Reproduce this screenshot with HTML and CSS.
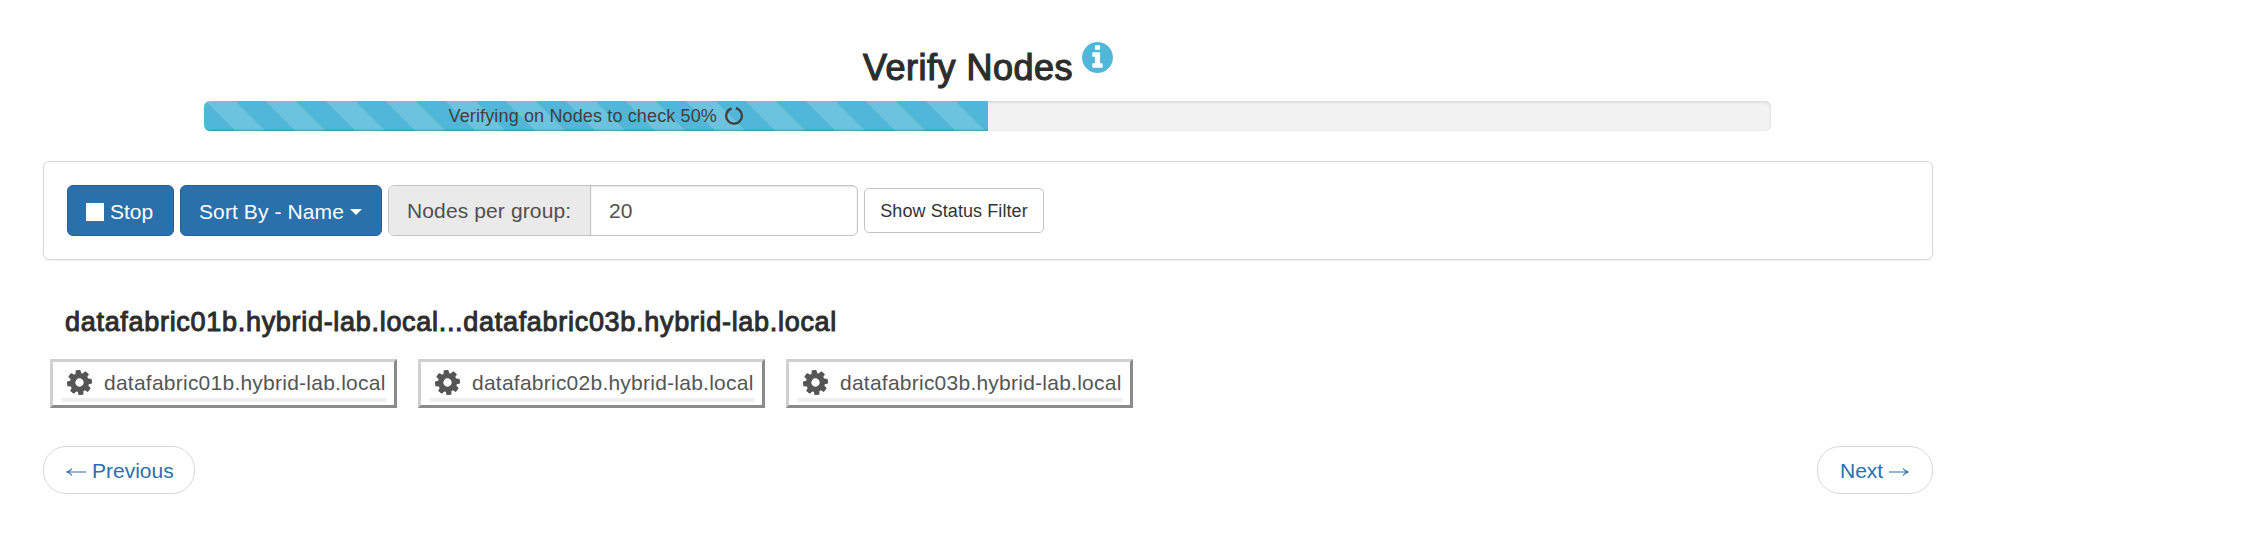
FILE: index.html
```
<!DOCTYPE html>
<html lang="en">
<head>
<meta charset="utf-8">
<title>Verify Nodes</title>
<link rel="stylesheet" href="styles.css">
</head>
<body>
<svg class="sprite" aria-hidden="true">
  <symbol id="cog" viewBox="0 0 1536 1536">
    <path transform="rotate(-7 768 768)" fill-rule="evenodd" d="M1024 768q0-106-75-181t-181-75-181 75-75 181 75 181 181 75 181-75 75-181zm512-109v222q0 12-8 23t-20 13l-185 28q-19 54-39 91 35 50 107 138 10 12 10 25t-9 23q-27 37-99 108t-94 71q-12 0-26-9l-138-108q-44 23-91 38-16 136-29 186-7 28-36 28H657q-14 0-24.500-8.500T621 1506l-28-184q-49-16-90-37l-141 107q-10 9-25 9-14 0-25-11-126-114-165-168-7-10-7-23 0-12 8-23 15-21 51-66.500t54-70.500q-27-50-41-99L29 913q-13-2-21-12.500T0 877V655q0-12 8-23t19-13l186-28q14-46 39-92-40-57-107-138-10-12-10-24 0-10 9-23 26-36 98.500-107.500T337 135q13 0 26 10l138 107q44-23 91-38 16-136 29-186 7-28 36-28h222q14 0 24.500 8.500T915 30l28 184q49 16 90 37l142-107q9-9 24-9 13 0 25 10 129 119 165 170 7 8 7 22 0 12-8 23-15 21-51 66.500t-54 70.500q26 50 41 98l183 28q13 2 21 12.500t8 23.500z"/>
  </symbol>
</svg>
<main class="page">
  <header class="head">
    <h3 class="title">Verify Nodes</h3>
    <svg class="info" viewBox="0 0 1536 1536"><path fill-rule="evenodd" d="M1024 1248v-160q0-14-9-23t-23-9h-96V544q0-14-9-23t-23-9H544q-14 0-23 9t-9 23v160q0 14 9 23t23 9h96v320h-96q-14 0-23 9t-9 23v160q0 14 9 23t23 9h448q14 0 23-9t9-23zM896 352V192q0-14-9-23t-23-9H672q-14 0-23 9t-9 23v160q0 14 9 23t23 9h192q14 0 23-9t9-23zM1536 768q0 209-103 385.500T1153.500 1433 768 1536t-385.500-103T103 1153.500 0 768t103-385.500T382.500 103 768 0t385.500 103T1433 382.500 1536 768z"/></svg>
  </header>
  <div class="progress">
    <div class="bar" style="width:50%">
      <span class="bar-text">Verifying on Nodes to check 50%</span>
      <svg class="spin" viewBox="0 0 18 20"><path d="M10.900 2.200A7.800 7.800 0 1 1 6.500 2.400"/></svg>
    </div>
  </div>
  <section class="panel">
    <button class="btn stop"><i class="square"></i><span>Stop</span></button>
    <button class="btn sort"><span>Sort By - Name</span><i class="caret"></i></button>
    <div class="group"><label class="addon">Nodes per group:</label><div class="field">20</div></div>
    <button class="filter">Show Status Filter</button>
  </section>
  <h4 class="range">datafabric01b.hybrid-lab.local...datafabric03b.hybrid-lab.local</h4>
  <div class="nodes">
    <div class="node"><div class="row"><svg class="cog"><use href="#cog"/></svg><span>datafabric01b.hybrid-lab.local</span></div><div class="mini"></div></div>
    <div class="node"><div class="row"><svg class="cog"><use href="#cog"/></svg><span>datafabric02b.hybrid-lab.local</span></div><div class="mini"></div></div>
    <div class="node"><div class="row"><svg class="cog"><use href="#cog"/></svg><span>datafabric03b.hybrid-lab.local</span></div><div class="mini"></div></div>
  </div>
  <nav class="pager">
    <a class="pill prev"><svg class="arrow" viewBox="0 0 20 10"><path d="M20 5H1.500M6 1.500Q4 4 1 5Q4 6 6 8.500"/></svg><span>Previous</span></a>
    <a class="pill next"><span>Next</span><svg class="arrow" viewBox="0 0 20 10"><path d="M0 5H18.500M14 1.500Q16 4 19 5Q16 6 14 8.500"/></svg></a>
  </nav>
</main>
</body>
</html>
```
FILE: styles.css
```
* { box-sizing: border-box; }
body { margin: 0; background: #fff; color: #2d2d2d; font: 21px/30px "Liberation Sans", Arial, sans-serif; }
h3, h4 { margin: 0; font-weight: 400; }
button { margin: 0; font-family: inherit; }
span, h3, h4, label { white-space: nowrap; }
.sprite { position: absolute; width: 0; height: 0; }
.page { width: 1890px; margin-left: 43px; padding-top: 40px; }

.head { display: flex; justify-content: center; align-items: flex-start; height: 61px; }
.title { margin-top: 8px; font-size: 36px; line-height: 40px; -webkit-text-stroke: 1.2px #2d2d2d; letter-spacing: .5px; }
.info { width: 31px; height: 31px; margin: 2px 0 0 9px; fill: #50b7d8; }

.progress { width: 1567px; height: 30px; margin: 0 auto 30px 161px; border-radius: 6px; overflow: hidden; background: #f2f2f2; box-shadow: inset 0 1px 3px rgba(0,0,0,.15); }
.bar { display: flex; justify-content: center; align-items: center; height: 30px; font-size: 18px; color: #404040; background-color: #50b7d8; background-image: linear-gradient(45deg, rgba(255,255,255,.16) 25%, transparent 25%, transparent 50%, rgba(255,255,255,.16) 50%, rgba(255,255,255,.16) 75%, transparent 75%); background-size: 60px 60px; background-position: 2px 0; box-shadow: inset 0 -1.500px 0 rgba(0,0,0,.15); }
.bar-text { letter-spacing: .14px; }
.spin { width: 18px; height: 20px; margin-left: 8px; fill: none; stroke: #404040; stroke-width: 2.3; }

.panel { display: flex; align-items: center; height: 99px; padding: 0 23px; border: 1px solid #d8d8d8; border-radius: 6px; box-shadow: 0 1px 1px rgba(0,0,0,.05); }
.btn { display: flex; align-items: center; height: 51px; margin-right: 6px; padding: 2px 0 0; border: 1px solid #265f94; border-radius: 6px; background: #2a70ab; color: #fff; font-size: 21px; }
.stop { width: 107px; padding-left: 18px; }
.square { width: 18px; height: 18px; margin-right: 6px; background: #fff; }
.sort { width: 202px; padding-left: 18px; letter-spacing: .1px; }
.caret { margin-left: 6px; border: 6px solid transparent; border-top-color: #fff; border-bottom: 0; }
.group { display: flex; width: 470px; height: 51px; margin-right: 6px; border: 1px solid #c3c3c3; border-radius: 6px; overflow: hidden; color: #505050; line-height: 49px; }
.addon { width: 202px; padding-left: 18px; border-right: 1px solid #c3c3c3; background: #eaeaea; letter-spacing: .12px; }
.field { flex: 1; padding-left: 18px; box-shadow: inset 0 1px 2px rgba(0,0,0,.12); }
.filter { width: 180px; height: 45px; padding: 1px 0 0; border: 1px solid #c3c3c3; border-radius: 5px; background: #fff; color: #333; font-size: 18px; letter-spacing: .08px; white-space: nowrap; }

.range { margin: 47px 0 0 22px; font-size: 27px; line-height: 30px; letter-spacing: .7px; -webkit-text-stroke: 1px #2d2d2d; }
.nodes { display: flex; gap: 21px; margin: 22px 0 0 7px; }
.node { width: 347px; height: 49px; padding: 8px 7px 0 8px; border: 3px solid; border-color: #d0d0d0 #8b8b8b #8b8b8b #d0d0d0; color: #555; }
.row { display: flex; align-items: center; height: 28px; padding: 0 0 3px 6px; letter-spacing: .24px; }
.cog { width: 25px; height: 25px; margin-right: 12px; fill: #555; }
.mini { height: 4px; border-radius: 2px; background: #efefef; }

.pager { display: flex; justify-content: space-between; margin-top: 38px; }
.pill { display: flex; align-items: center; height: 48px; padding-top: 1px; border: 1px solid #d8d8d8; border-radius: 23px; color: #2a70ab; }
.prev { width: 152px; padding-left: 22px; }
.next { width: 116px; padding-left: 22px; }
.arrow { width: 20px; height: 10px; margin-top: 3px; fill: none; stroke: #2a70ab; stroke-width: 1.2; }
.prev span { margin-left: 6px; }
.next span { margin-right: 6px; }
```
